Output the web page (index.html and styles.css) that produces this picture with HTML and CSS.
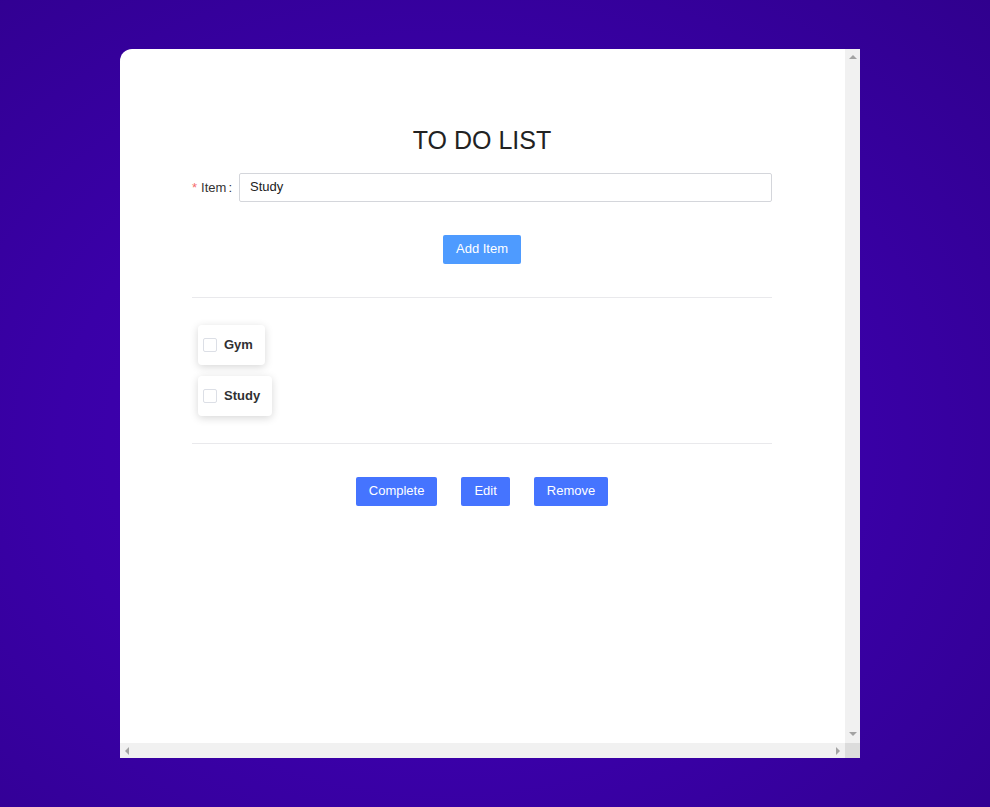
FILE: index.html
```html
<!DOCTYPE html>
<html>
<head>
<meta charset="utf-8">
<link rel="stylesheet" href="styles.css">
</head>
<body>
<div class="frame">
  <div class="viewport">
    <div class="content">
      <h1 class="title">TO DO LIST</h1>
      <div class="form-row">
        <label class="label"><span class="req">*</span>Item<span class="colon">:</span></label>
        <input class="input" type="text" value="Study">
      </div>
      <div class="center-row">
        <button class="btn btn-light">Add Item</button>
      </div>
      <div class="divider"></div>
      <div class="list">
        <div class="item"><span class="check"></span><span class="item-text">Gym</span></div>
        <div class="item"><span class="check"></span><span class="item-text">Study</span></div>
      </div>
      <div class="divider"></div>
      <div class="center-row actions">
        <button class="btn btn-dark">Complete</button>
        <button class="btn btn-dark">Edit</button>
        <button class="btn btn-dark">Remove</button>
      </div>
    </div>
  </div>
  <div class="vbar"><span class="arrow-up"></span><span class="arrow-down"></span></div>
  <div class="hbar"><span class="arrow-left"></span><span class="arrow-right"></span></div>
  <div class="corner"></div>
</div>
</body>
</html>
```

FILE: styles.css
```css
html, body {
  margin: 0;
  padding: 0;
}
body {
  width: 990px;
  height: 807px;
  overflow: hidden;
  background: radial-gradient(ellipse at 45% 55%, #4200b8 0%, #3a00a8 50%, #30008e 100%);
  font-family: "Liberation Sans", Arial, sans-serif;
  padding-top: 49px;
  box-sizing: border-box;
}
.frame {
  margin-left: 120px;
  width: 740px;
  height: 709px;
  background: #fff;
  border-top-left-radius: 12px;
  overflow: hidden;
  display: grid;
  grid-template-columns: 725px 15px;
  grid-template-rows: 694px 15px;
}
.viewport {
  overflow: hidden;
}
.vbar {
  background: #f1f1f1;
  display: flex;
  flex-direction: column;
  align-items: center;
  justify-content: space-between;
  padding: 6px 0 7px;
}
.hbar {
  background: #f1f1f1;
  display: flex;
  align-items: center;
  justify-content: space-between;
  padding: 0 5px;
}
.corner {
  background: #dcdcdc;
}
.arrow-up {
  width: 0;
  height: 0;
  border-left: 4px solid transparent;
  border-right: 4px solid transparent;
  border-bottom: 4px solid #a3a3a3;
}
.arrow-down {
  width: 0;
  height: 0;
  border-left: 4px solid transparent;
  border-right: 4px solid transparent;
  border-top: 4px solid #a3a3a3;
}
.arrow-left {
  width: 0;
  height: 0;
  border-top: 4px solid transparent;
  border-bottom: 4px solid transparent;
  border-right: 4px solid #a3a3a3;
}
.arrow-right {
  width: 0;
  height: 0;
  border-top: 4px solid transparent;
  border-bottom: 4px solid transparent;
  border-left: 4px solid #a3a3a3;
}
.content {
  padding: 76px 73px 0 72px;
}
.title {
  margin: 0;
  font-size: 25px;
  font-weight: normal;
  line-height: 30px;
  text-align: center;
  color: #222;
}
.form-row {
  display: flex;
  align-items: center;
  margin-top: 18px;
}
.label {
  width: 47px;
  box-sizing: border-box;
  padding-right: 7px;
  text-align: right;
  font-size: 13px;
  color: #333;
  white-space: nowrap;
}
.req {
  color: #f56c6c;
  margin-right: 4px;
}
.colon {
  margin-left: 2px;
}
.input {
  flex: 1;
  height: 29px;
  box-sizing: border-box;
  border: 1px solid #d4d6db;
  border-radius: 2px;
  padding: 0 10px 2px;
  font-family: "Liberation Sans", Arial, sans-serif;
  font-size: 13px;
  color: #222;
  outline: none;
  margin: 0;
}
.center-row {
  display: flex;
  justify-content: center;
  margin-top: 33px;
}
.actions {
  gap: 24px;
}
.btn {
  height: 29px;
  border: none;
  border-radius: 2px;
  padding: 0 13px 2px;
  color: #fff;
  font-family: "Liberation Sans", Arial, sans-serif;
  font-size: 13px;
  margin: 0;
  cursor: pointer;
}
.btn-light {
  background: #4e9bff;
}
.btn-dark {
  background: #4574ff;
}
.divider {
  height: 1px;
  background: #e9e9ec;
  margin-top: 33px;
}
.list {
  padding: 27px 6px 27px;
  display: flex;
  flex-direction: column;
  align-items: flex-start;
  gap: 11px;
}
.list + .divider {
  margin-top: 0;
}
.item {
  display: flex;
  align-items: center;
  height: 40px;
  padding: 0 12px 0 5px;
  background: #fff;
  border-radius: 4px;
  box-shadow: 0 2px 8px rgba(0, 0, 0, 0.16);
}
.check {
  width: 14px;
  height: 14px;
  box-sizing: border-box;
  border: 1px solid #dcdfe6;
  border-radius: 2px;
  margin-right: 7px;
}
.item-text {
  font-size: 13px;
  font-weight: bold;
  color: #303133;
  padding-bottom: 1px;
}
```
